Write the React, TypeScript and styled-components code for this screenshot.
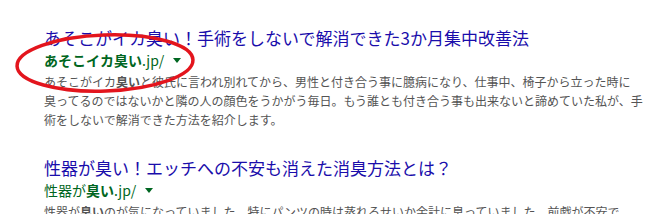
import React from 'react';
import styled, { createGlobalStyle } from 'styled-components';

const GlobalStyle = createGlobalStyle`
  html, body {
    margin: 0;
    padding: 0;
    background: #fff;
  }
  body {
    font-family: "Noto Sans CJK JP", "Liberation Sans", sans-serif;
  }
`;

const Page = styled.div`
  position: relative;
  width: 663px;
  height: 214px;
  overflow: hidden;
  padding: 27px 0 0 44px;
  box-sizing: border-box;
  display: flex;
  flex-direction: column;
  gap: 28px;
`;

const Result = styled.div`
  display: flex;
  flex-direction: column;
`;

const Title = styled.a`
  font-size: 17px;
  line-height: 22px;
  color: #1a0dab;
  text-decoration: none;
  white-space: nowrap;
`;

const Url = styled.div`
  margin-top: 3px;
  font-size: 14px;
  line-height: 16px;
  color: #006621;
  display: flex;
  align-items: center;
  white-space: nowrap;
  b {
    font-weight: 700;
  }
`;

const Arrow = styled.span`
  margin-left: 9px;
  width: 0;
  height: 0;
  border-left: 4px solid transparent;
  border-right: 4px solid transparent;
  border-top: 5px solid #006621;
`;

const Desc = styled.div`
  margin-top: 4px;
  width: 600px;
  font-size: 12px;
  line-height: 19px;
  color: #545454;
  white-space: nowrap;
  b {
    font-weight: 700;
  }
`;

const Mark = styled.svg`
  position: absolute;
  left: 0;
  top: 0;
  pointer-events: none;
`;

export default function App() {
  return (
    <>
      <GlobalStyle />
      <Page>
        <Result>
          <Title href="#">あそこがイカ臭い！手術をしないで解消できた3か月集中改善法</Title>
          <Url>
            <b>あそこイカ臭い</b>.jp/
            <Arrow />
          </Url>
          <Desc>
            あそこがイカ<b>臭い</b>と彼氏に言われ別れてから、男性と付き合う事に臆病になり、仕事中、椅子から立った時に
            <br />
            臭ってるのではないかと隣の人の顔色をうかがう毎日。もう誰とも付き合う事も出来ないと諦めていた私が、手
            <br />
            術をしないで解消できた方法を紹介します。
          </Desc>
        </Result>
        <Result>
          <Title href="#">性器が臭い！エッチへの不安も消えた消臭方法とは？</Title>
          <Url>
            性器が<b>臭い</b>.jp/
            <Arrow />
          </Url>
          <Desc>
            性器が<b>臭い</b>のが気になっていました。特にパンツの時は蒸れるせいか余計に臭っていました。前戯が不安で
          </Desc>
        </Result>
        <Mark width="663" height="214" viewBox="0 0 663 214">
          <ellipse
            cx="105"
            cy="63"
            rx="88"
            ry="28"
            transform="rotate(-2 105 63)"
            fill="none"
            stroke="#e3151d"
            strokeWidth="3.5"
          />
        </Mark>
      </Page>
    </>
  );
}
